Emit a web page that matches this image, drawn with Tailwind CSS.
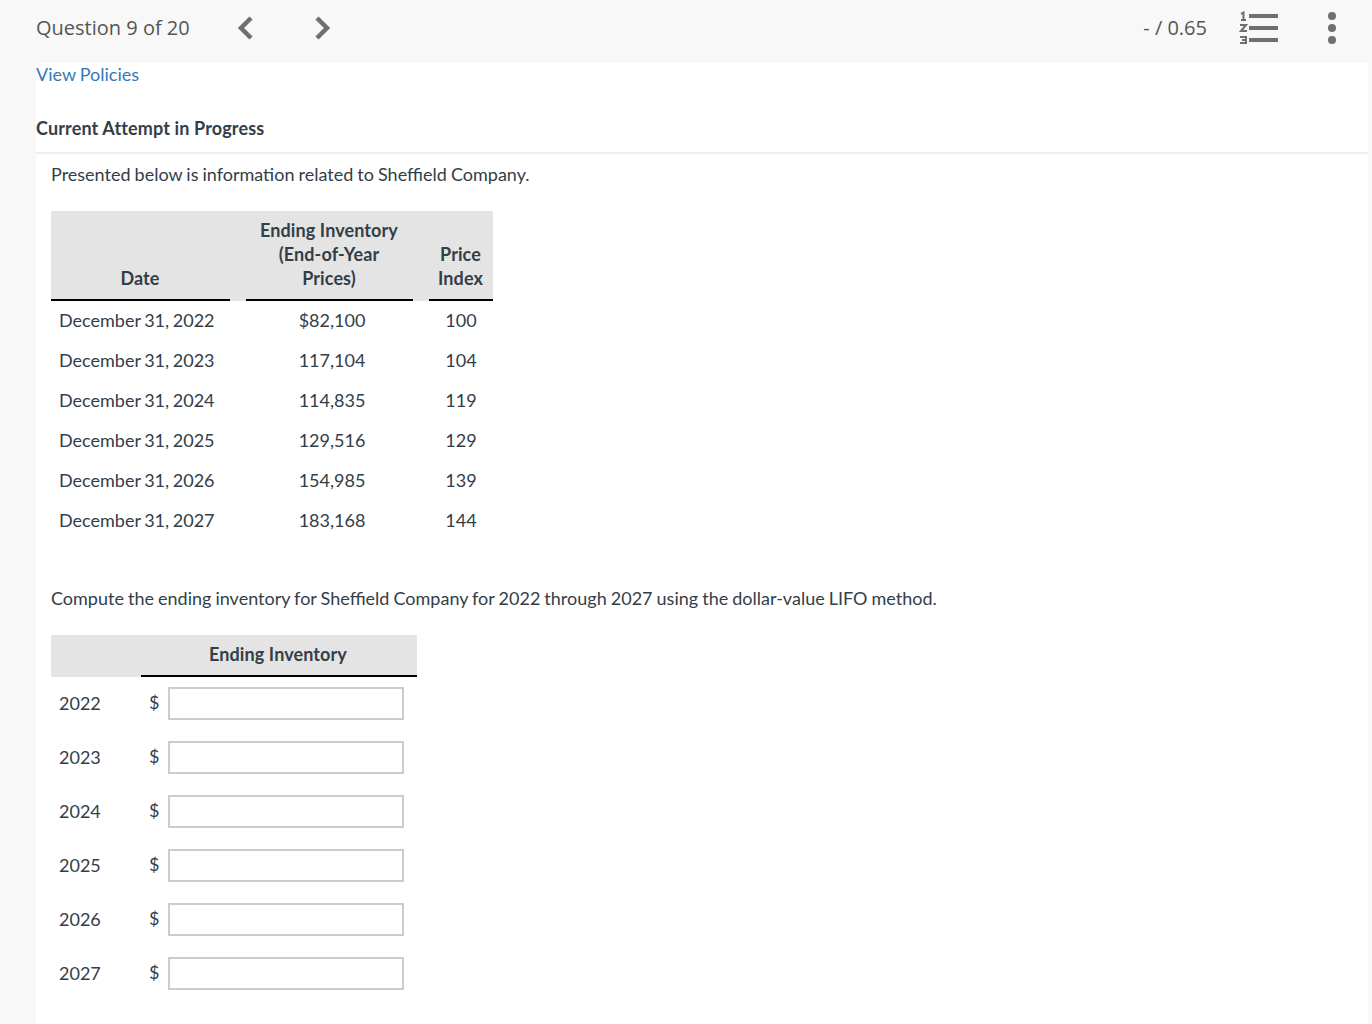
<!DOCTYPE html>
<html lang="en">
<head>
    <meta charset="UTF-8">
    <title>Question 9 of 20</title>
    <script src="https://cdn.jsdelivr.net/npm/@tailwindcss/browser@4"></script>
</head>
<body class="bg-[#f8f8f8] font-['Lato',sans-serif] text-[18px] text-[#333e48] [word-spacing:-0.55px] h-[1024px] overflow-hidden">
    <header class="h-[63px] pb-[7px] flex items-center pl-[36px] text-[#555] font-['Open_Sans',sans-serif] [word-spacing:0]">
        <span class="w-[200px] text-[20px]">Question 9 of 20</span>
        <svg class="w-[18px] h-[26px]" viewBox="0 0 18 26"><path d="M15 3 5 13l10 10" fill="none" stroke="#6f6f6f" stroke-width="4.5"/></svg>
        <svg class="ml-[60px] w-[18px] h-[26px]" viewBox="0 0 18 26"><path d="M3 3l10 10L3 23" fill="none" stroke="#6f6f6f" stroke-width="4.5"/></svg>
        <span class="ml-auto text-[20px]">- / 0.65</span>
        <svg class="ml-[32px] w-[40px] h-[34px]" viewBox="0 0 40 34">
            <g fill="none" stroke="#6f6f6f" stroke-width="2">
                <path d="M2 3 4.500 1.500V9M2 9h5"/>
                <path d="M1 14h6L2 20h6"/>
                <path d="M1 26h6v6H1M3 29h4"/>
            </g>
            <g fill="#6f6f6f"><rect x="10" y="3" width="29" height="4"/><rect x="10" y="15" width="29" height="4"/><rect x="10" y="27" width="29" height="4"/></g>
        </svg>
        <svg class="ml-[47px] mr-[34px] w-[12px] h-[34px]" viewBox="0 0 12 34"><g fill="#6f6f6f"><circle cx="6" cy="5" r="4"/><circle cx="6" cy="17" r="4"/><circle cx="6" cy="29" r="4"/></g></svg>
    </header>
    <main class="ml-[36px] mr-[4px] h-[961px] bg-white">
        <a class="block leading-[22px] text-[#337ab7]" href="#">View Policies</a>
        <h2 class="mt-[31px] pb-[12px] leading-[24px] font-bold tracking-[0.14px] [word-spacing:0] text-[#333e48] border-b-2 border-[#eeeeee]">Current Attempt in Progress</h2>
        <div class="pl-[15px]">
            <p class="mt-[8px] leading-[24px]">Presented below is information related to Sheffield Company.</p>

            <div class="mt-[25px] w-[442px]">
                <div class="grid grid-cols-[179px_167px_64px] gap-x-[16px] bg-[#e4e4e4] font-bold tracking-[0.1px] [word-spacing:0] text-center leading-[24px] h-[90px]">
                    <div class="flex items-end justify-center pb-[9px] pr-[1px] border-b-2 border-black">Date</div>
                    <div class="flex items-end justify-center pb-[9px] pr-[1px] border-b-2 border-black">Ending Inventory<br>(End-of-Year<br>Prices)</div>
                    <div class="flex items-end justify-center pb-[9px] pr-[1px] border-b-2 border-black">Price<br>Index</div>
                </div>
                <div class="-mt-[1px] grid grid-cols-[179px_167px_64px] gap-x-[16px] auto-rows-[40px] items-center leading-[24px] text-center [word-spacing:-1px]">
                    <div class="text-left pl-[8px]">December 31, 2022</div><div class="pl-[5px]">$82,100</div><div>100</div>
                    <div class="text-left pl-[8px]">December 31, 2023</div><div class="pl-[5px]">117,104</div><div>104</div>
                    <div class="text-left pl-[8px]">December 31, 2024</div><div class="pl-[5px]">114,835</div><div>119</div>
                    <div class="text-left pl-[8px]">December 31, 2025</div><div class="pl-[5px]">129,516</div><div>129</div>
                    <div class="text-left pl-[8px]">December 31, 2026</div><div class="pl-[5px]">154,985</div><div>139</div>
                    <div class="text-left pl-[8px]">December 31, 2027</div><div class="pl-[5px]">183,168</div><div>144</div>
                </div>
            </div>

            <p class="mt-[46px] leading-[24px]">Compute the ending inventory for Sheffield Company for 2022 through 2027 using the dollar-value LIFO method.</p>

            <div class="mt-[25px] w-[366px]">
                <div class="bg-[#e4e4e4] pl-[90px]">
                    <div class="h-[42px] pb-[2px] pr-[2px] flex items-center justify-center font-bold tracking-[0.1px] [word-spacing:0] border-b-2 border-black">Ending Inventory</div>
                </div>
                <div class="pt-[10px] flex flex-col gap-[21px]">
                    <div class="flex items-center h-[33px]"><span class="w-[90px] pl-[8px]">2022</span><span class="w-[27px] pl-[8px] pb-[2px]">$</span><input type="text" class="w-[236px] h-[33px] bg-white border-2 border-[#cccccc]"></div>
                    <div class="flex items-center h-[33px]"><span class="w-[90px] pl-[8px]">2023</span><span class="w-[27px] pl-[8px] pb-[2px]">$</span><input type="text" class="w-[236px] h-[33px] bg-white border-2 border-[#cccccc]"></div>
                    <div class="flex items-center h-[33px]"><span class="w-[90px] pl-[8px]">2024</span><span class="w-[27px] pl-[8px] pb-[2px]">$</span><input type="text" class="w-[236px] h-[33px] bg-white border-2 border-[#cccccc]"></div>
                    <div class="flex items-center h-[33px]"><span class="w-[90px] pl-[8px]">2025</span><span class="w-[27px] pl-[8px] pb-[2px]">$</span><input type="text" class="w-[236px] h-[33px] bg-white border-2 border-[#cccccc]"></div>
                    <div class="flex items-center h-[33px]"><span class="w-[90px] pl-[8px]">2026</span><span class="w-[27px] pl-[8px] pb-[2px]">$</span><input type="text" class="w-[236px] h-[33px] bg-white border-2 border-[#cccccc]"></div>
                    <div class="flex items-center h-[33px]"><span class="w-[90px] pl-[8px]">2027</span><span class="w-[27px] pl-[8px] pb-[2px]">$</span><input type="text" class="w-[236px] h-[33px] bg-white border-2 border-[#cccccc]"></div>
                </div>
            </div>
        </div>
    </main>
</body>
</html>
